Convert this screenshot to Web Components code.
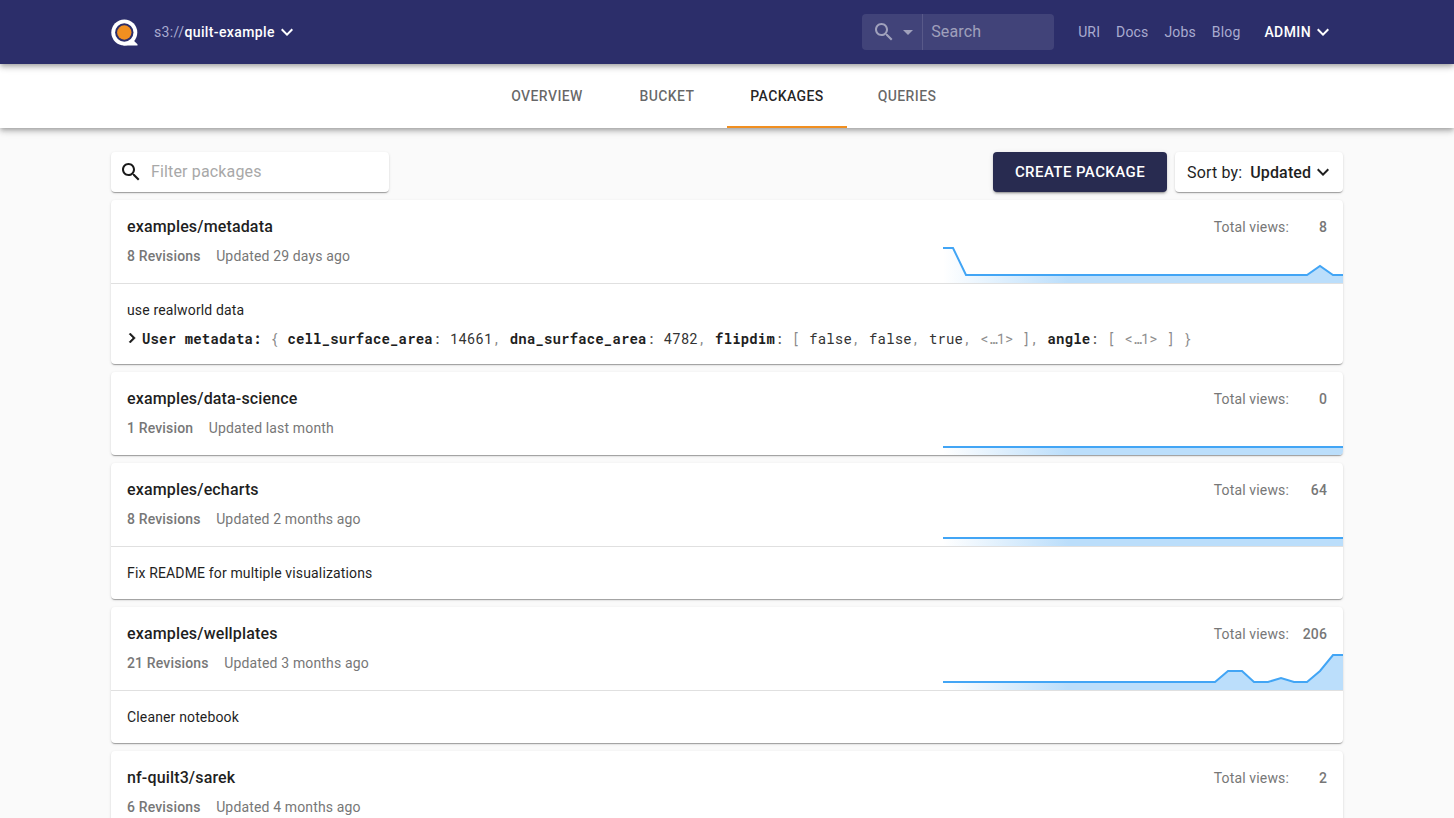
<!DOCTYPE html>
<html><head><meta charset="utf-8"><title>Packages</title>
<style>
html,body{margin:0;padding:0;height:100%;overflow:hidden;background:#fafafa}
body{font-family:Roboto,"Liberation Sans",sans-serif;letter-spacing:.15px}
q-app{display:block}
</style></head><body>
<q-app>
  <q-nav></q-nav>
  <q-tabs></q-tabs>
  <q-page>
    <q-toolbar></q-toolbar>
    <q-card name="examples/metadata" revisions="8 Revisions" updated="Updated 29 days ago" views="8"
      line="0,8 10,8 23,35 364,35 377,26 390,35 400,35">
      <div style="font:14px/20px Roboto,sans-serif;color:#1f1f1f">use realworld data</div>
      <q-meta></q-meta>
    </q-card>
    <q-card name="examples/data-science" revisions="1 Revision" updated="Updated last month" views="0" line="0,35 400,35"></q-card>
    <q-card name="examples/echarts" revisions="8 Revisions" updated="Updated 2 months ago" views="64" line="0,35 400,35">
      <div style="font:14px/20px Roboto,sans-serif;color:#1f1f1f">Fix README for multiple visualizations</div>
    </q-card>
    <q-card name="examples/wellplates" revisions="21 Revisions" updated="Updated 3 months ago" views="206"
      line="0,35 272,35 285,24 299,24 311,35 325,35 338,31 351,35 364,35 377,24 390,8 400,8">
      <div style="font:14px/20px Roboto,sans-serif;color:#1f1f1f">Cleaner notebook</div>
    </q-card>
    <q-card name="nf-quilt3/sarek" revisions="6 Revisions" updated="Updated 4 months ago" views="2" line="0,35 400,35"></q-card>
  </q-page>
</q-app>
<script>
const ICON={
 search:'M15.5 14h-.79l-.28-.27C15.41 12.59 16 11.11 16 9.5 16 5.91 13.09 3 9.5 3S3 5.91 3 9.5 5.91 16 9.5 16c1.61 0 3.09-.59 4.23-1.57l.27.28v.79l5 4.99L20.49 19l-4.99-5zm-6 0C7.01 14 5 11.99 5 9.5S7.01 5 9.5 5 14 7.01 14 9.5 11.99 14 9.5 14z',
 expand:'M16.59 8.59L12 13.17 7.41 8.59 6 10l6 6 6-6z',
 drop:'M7 10l5 5 5-5z',
 right:'M10 6L8.59 7.41 13.17 12l-4.58 4.59L10 18l6-6z'};
const icon=(n,c,s=24)=>`<svg width="${s}" height="${s}" viewBox="0 0 24 24" fill="${c}" style="display:block;flex:none"><path d="${ICON[n]}"/></svg>`;
class Base extends HTMLElement{
  connectedCallback(){ if(!this.shadowRoot){this.attachShadow({mode:'open'}).innerHTML=this.html();} }
}
customElements.define('q-nav',class extends Base{html(){return `
<style>
:host{display:block;position:relative;z-index:2;height:64px;background:#2c2e6a;box-shadow:0 2px 4px -1px rgba(0,0,0,.2),0 4px 5px rgba(0,0,0,.14),0 1px 10px rgba(0,0,0,.12);color:#fff;font-family:Roboto,sans-serif}
.in{display:flex;align-items:center;height:64px;box-sizing:border-box;padding:0 119px 0 110px}
.logo{display:block;flex:none;margin-right:16px}
.bucket{font-size:14px;font-weight:500;display:flex;align-items:center;letter-spacing:.38px}
.bucket span{color:#a9abd0;font-weight:400}
.sp{flex:1}
.search{display:flex;align-items:center;width:192px;height:36px;border-radius:4px;background:rgba(255,255,255,.1);margin-right:24px;box-sizing:border-box}
.sb{display:flex;align-items:center;width:61px;height:36px;box-sizing:border-box;padding-left:10px;border-right:1px solid rgba(255,255,255,.12)}
.sb svg:last-child{margin-left:0}
.st{font-size:16px;color:rgba(255,255,255,.5);padding-left:8px;padding-bottom:2px}
a{font-size:14px;color:#a9abd0;margin-right:16px;text-decoration:none;padding-bottom:1px}
a.l{margin-right:24px}
.admin{font-size:14px;font-weight:500;display:flex;align-items:center;letter-spacing:.4px}
</style>
<div class="in">
<svg class="logo" width="28" height="28" viewBox="0 0 28 28"><circle cx="14.3" cy="14.5" r="13" fill="#fff"/><circle cx="14.3" cy="14.5" r="9.2" fill="#2c2e6a"/><circle cx="14.3" cy="14.5" r="7.2" fill="#f18f20"/><path d="M13 27.5H27.5V26.2L22 21Z" fill="#fff"/></svg>
<div class="bucket"><span>s3://</span>quilt-example${icon('expand','#fff')}</div>
<div class="sp"></div>
<div class="search"><div class="sb">${icon('search','rgba(255,255,255,.5)')}${icon('drop','rgba(255,255,255,.5)')}</div><div class="st">Search</div></div>
<a>URI</a><a>Docs</a><a>Jobs</a><a class="l">Blog</a>
<div class="admin">ADMIN${icon('expand','#fff')}</div>
</div>`}});
customElements.define('q-tabs',class extends Base{html(){return `
<style>
:host{display:block;position:relative;z-index:1;height:64px;background:#fff;box-shadow:0 2px 4px -1px rgba(0,0,0,.2),0 4px 5px rgba(0,0,0,.14),0 1px 10px rgba(0,0,0,.12);font-family:Roboto,sans-serif}
.in{display:flex;justify-content:center;height:64px}
.t{width:120px;height:64px;box-sizing:border-box;display:flex;align-items:center;justify-content:center;font-size:14px;font-weight:500;letter-spacing:.4px;color:rgba(0,0,0,.6);border-bottom:2px solid transparent;padding-top:1px}
.a{color:rgba(0,0,0,.87);border-bottom-color:#f18f20}
</style>
<div class="in"><div class="t">OVERVIEW</div><div class="t">BUCKET</div><div class="t a">PACKAGES</div><div class="t">QUERIES</div></div>`}});
customElements.define('q-page',class extends Base{html(){return `
<style>:host{display:block;padding:24px 111px 0}
::slotted(q-card){margin-top:8px}</style><slot></slot>`}});
customElements.define('q-toolbar',class extends Base{html(){return `
<style>
:host{display:flex;align-items:stretch;height:40px;font-family:Roboto,sans-serif}
.box{background:#fff;border-radius:4px;box-shadow:0 2px 1px -1px rgba(0,0,0,.2),0 1px 1px rgba(0,0,0,.14),0 1px 3px rgba(0,0,0,.12);display:flex;align-items:center;box-sizing:border-box}
.f{width:278px;padding-left:8px;font-size:16px;color:#a8a8a8}
.f svg{margin-right:8px}
.f span{padding-bottom:2px}
.sp{flex:1}
.b{width:174px;background:#282b50;border-radius:4px;color:#fff;display:flex;align-items:center;justify-content:center;font-size:15px;font-weight:500;letter-spacing:.43px;box-shadow:0 3px 1px -2px rgba(0,0,0,.2),0 2px 2px rgba(0,0,0,.14),0 1px 5px rgba(0,0,0,.12);margin-right:8px}
.s{width:168px;padding-left:12px;font-size:16px;color:#1f1f1f}
.s b{font-weight:500;margin-left:8px}
</style>
<div class="box f">${icon('search','#1a1a1a')}<span>Filter packages</span></div><div class="sp"></div>
<div class="b">CREATE PACKAGE</div>
<div class="box s">Sort by:<b>Updated</b>${icon('expand','#1f1f1f')}</div>`}});
customElements.define('q-card',class extends Base{html(){
 const pts=this.getAttribute('line');
 const id='g'+Math.random().toString(36).slice(2);
 const hasBody=this.children.length>0;
 return `
<style>
:host{display:block;background:#fff;border-radius:4px;box-shadow:0 2px 1px -1px rgba(0,0,0,.2),0 1px 1px rgba(0,0,0,.14),0 1px 3px rgba(0,0,0,.12);font-family:Roboto,sans-serif;overflow:hidden}
.h{display:flex;height:83px}
.l{flex:1;padding:17px 16px 0}
.n{font-size:16px;line-height:20px;font-weight:500;color:#1f1f1f}
.r{margin-top:9px;font-size:14px;line-height:20px;color:#777;display:flex;gap:15.6px}
.r b{font-weight:500}
.v{width:400px;display:flex;flex-direction:column;justify-content:space-between}
.tv{display:flex;justify-content:flex-end;padding:17px 16px 0;font-size:14px;line-height:20px;color:#777}
.tv b{font-weight:500;width:38px;text-align:right}
svg{display:block}
.b{border-top:1px solid rgba(0,0,0,.12);padding:16px}
.b[hidden]{display:none}
</style>
<div class="h"><div class="l"><div class="n">${this.getAttribute('name')}</div><div class="r"><b>${this.getAttribute('revisions')}</b><span>${this.getAttribute('updated')}</span></div></div>
<div class="v"><div class="tv">Total views:<b>${this.getAttribute('views')}</b></div>
<svg width="400" height="43" viewBox="0 0 400 43"><defs><linearGradient id="${id}" gradientUnits="userSpaceOnUse" x1="0" x2="125" y1="0" y2="0"><stop offset="0" stop-color="#bbdefb" stop-opacity="0"/><stop offset="1" stop-color="#bbdefb"/></linearGradient></defs>
<polygon points="${pts} 400,43 0,43" fill="url(#${id})"/><polyline points="${pts}" fill="none" stroke="#42a5f5" stroke-width="2"/></svg></div></div>
<div class="b" ${hasBody?'':'hidden'}><slot></slot></div>`}});
customElements.define('q-meta',class extends Base{html(){
 const c=`<i>,</i>`, col=`<u>:</u>`, more=`<em>&lt;…1&gt;</em>`;
 return `
<style>
:host{display:flex;align-items:center;margin-top:8px;height:20px;font:14px/20px "Roboto Mono","DejaVu Sans Mono",monospace;color:#333;white-space:pre;overflow:hidden}
svg{margin-left:-5px}
b{font-weight:700;color:#1f1f1f}
i{font-style:normal;color:#8a8a8a}
u{text-decoration:none;color:#555}
em{font-style:normal;color:#8f8f8f;letter-spacing:-.15px}
.m{display:block;padding-top:2px}
</style>
<svg width="20" height="20" viewBox="0 0 24 24" fill="#1a1a1a"><path d="${ICON.right}" stroke="#1a1a1a" stroke-width=".6"/></svg>
<div class="m"><b>User metadata:</b> <i>{</i> <b>cell_surface_area</b>${col} 14661${c} <b>dna_surface_area</b>${col} 4782${c} <b>flipdim</b>${col} <i>[</i> false${c} false${c} true${c} ${more} <i>]</i>${c} <b>angle</b>${col} <i>[</i> ${more} <i>]</i> <i>}</i></div>`}});
</script>
</body></html>
